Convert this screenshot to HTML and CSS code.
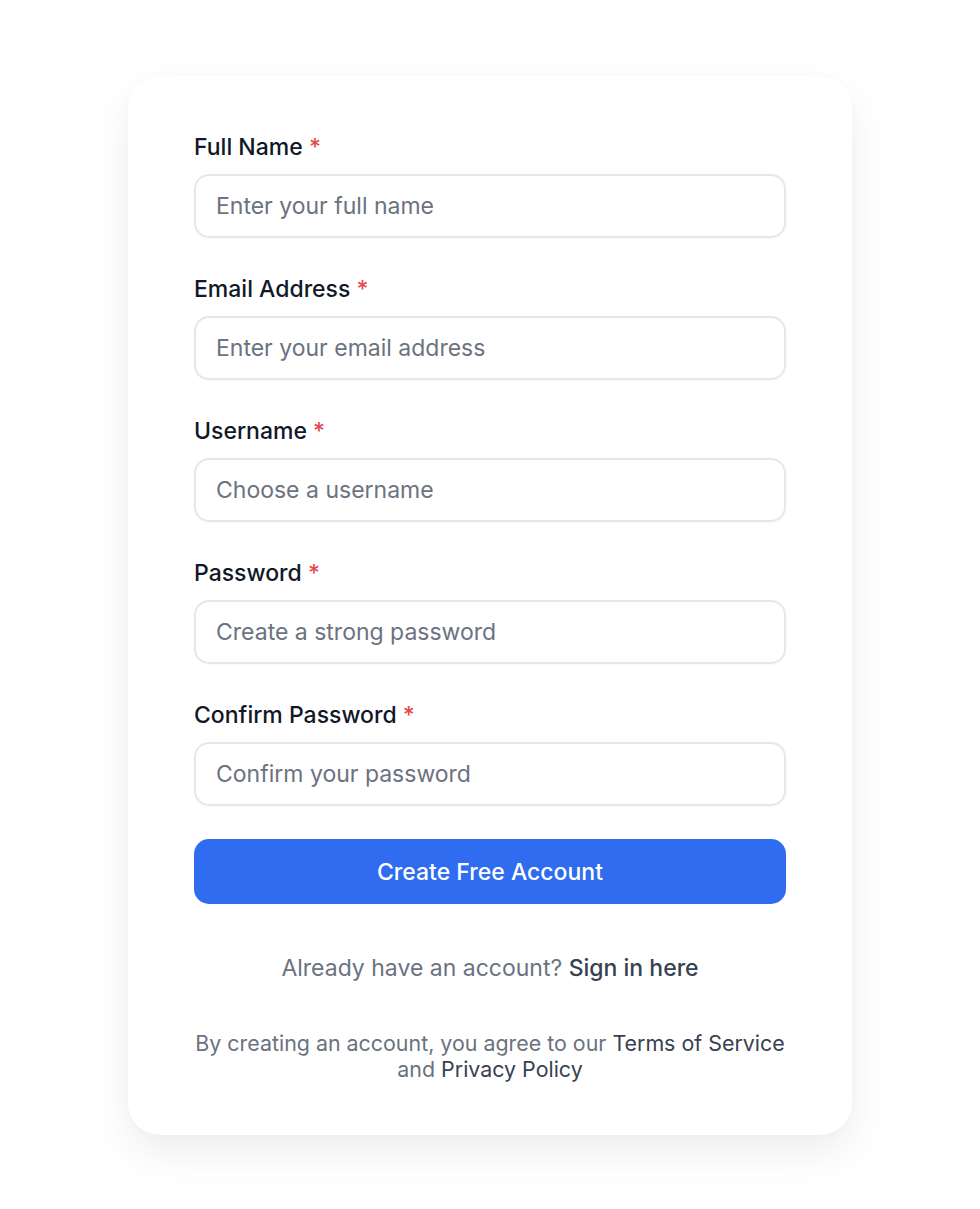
FILE: index.html
```html
<!DOCTYPE html>
<html>
<head>
<meta charset="utf-8">
<link rel="stylesheet" href="styles.css">
</head>
<body>
<div class="page">
  <form class="card">
    <div class="field">
      <label class="label">Full Name <span class="req">*</span></label>
      <div class="input">Enter your full name</div>
    </div>
    <div class="field">
      <label class="label">Email Address <span class="req">*</span></label>
      <div class="input">Enter your email address</div>
    </div>
    <div class="field">
      <label class="label">Username <span class="req">*</span></label>
      <div class="input">Choose a username</div>
    </div>
    <div class="field">
      <label class="label">Password <span class="req">*</span></label>
      <div class="input">Create a strong password</div>
    </div>
    <div class="field">
      <label class="label">Confirm Password <span class="req">*</span></label>
      <div class="input">Confirm your password</div>
    </div>
    <div class="button">Create Free Account</div>
    <p class="signin">Already have an account? <a class="link">Sign in here</a></p>
    <p class="terms">By creating an account, you agree to our <a class="link">Terms of Service</a> and <a class="link">Privacy Policy</a></p>
  </form>
</div>
</body>
</html>
```
FILE: styles.css
```css
* { box-sizing: border-box; }
html, body { margin: 0; padding: 0; background: #ffffff; }
body { font-family: Inter, "Noto Sans", sans-serif; }
.page { display: flex; justify-content: center; padding: 76px 0 80px; }
.card {
  width: 724px;
  background: #fff;
  border-radius: 32px;
  box-shadow: 0 18px 40px rgba(0,0,0,0.07), 0 2px 8px rgba(0,0,0,0.02);
  padding: 56px 66px 53px;
  display: flex;
  flex-direction: column;
}
.field { display: flex; flex-direction: column; }
.field + .field { margin-top: 36px; }
.label { font-size: 23px; font-weight: 500; color: #111827; line-height: 30px; margin-bottom: 12px; }
.req { color: #e5484d; }
.input {
  height: 64px;
  border: 2px solid #e5e7eb;
  border-radius: 15px;
  padding: 0 20px;
  display: flex;
  align-items: center;
  font-size: 23px;
  color: #6b7280;
  box-shadow: 0 1px 2px rgba(0,0,0,0.03);
}
.button {
  margin-top: 33px;
  height: 65px;
  border-radius: 15px;
  background: #2f6cf0;
  color: #fff;
  font-size: 23px;
  font-weight: 500;
  display: flex; align-items: center; justify-content: center;
}
.signin { margin: 49px 0 0; text-align: center; font-size: 23px; color: #6b7280; line-height: 30px; }
.link { color: #374151; font-weight: 500; }
.terms { margin: 47px 0 0; text-align: center; font-size: 21.4px; color: #6b7280; line-height: 26px; }
.terms .link { font-weight: 400; }
```
